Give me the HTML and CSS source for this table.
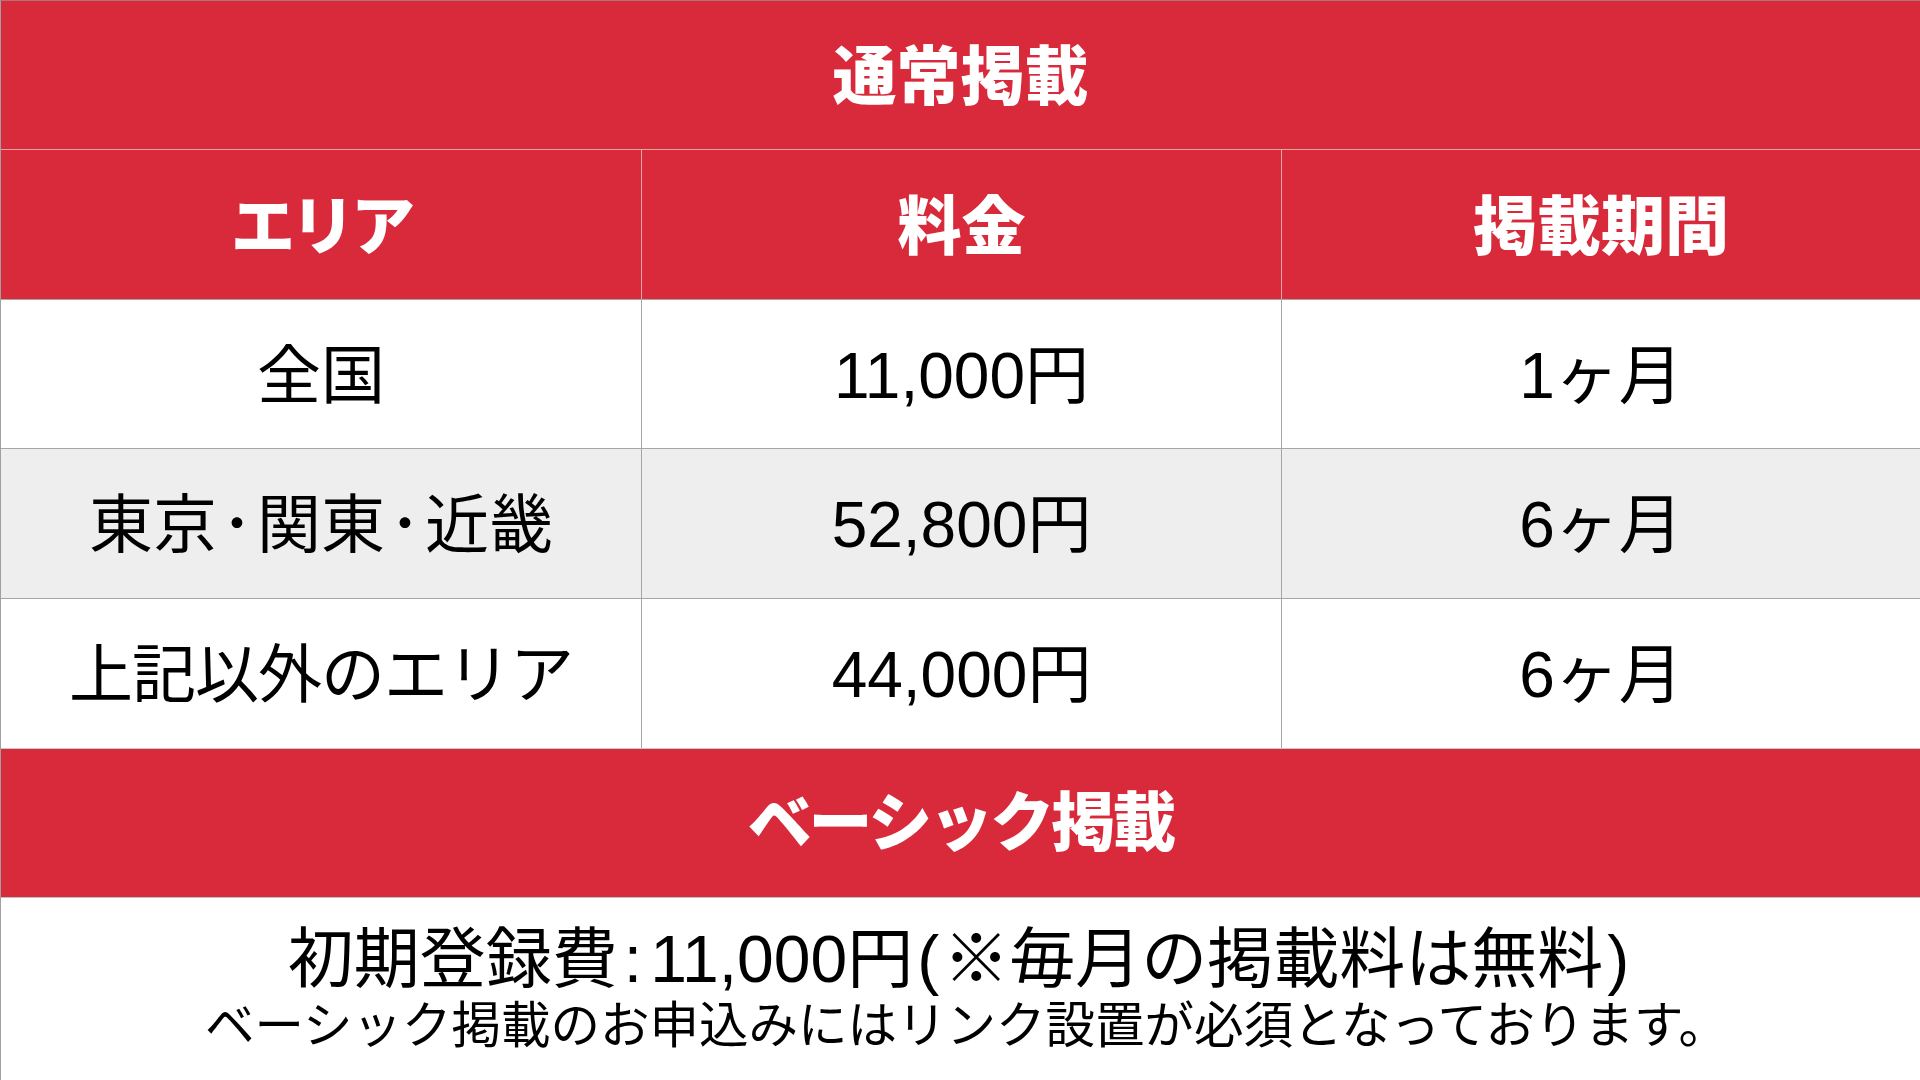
FILE: index.html
```html
<!DOCTYPE html>
<html lang="ja">
<head>
<meta charset="utf-8">
<title>通常掲載</title>
<link rel="stylesheet" href="styles.css">
</head>
<body>
<div class="sheet">
  <div class="band band-title">通常掲載</div>
  <div class="row row-head">
    <div class="cell cell-kana">エリア</div>
    <div class="cell">料金</div>
    <div class="cell">掲載期間</div>
  </div>
  <div class="row row-body">
    <div class="cell">全国</div>
    <div class="cell">11,000円</div>
    <div class="cell">1ヶ月</div>
  </div>
  <div class="row row-body row-alt">
    <div class="cell">東京<span class="dot">･</span>関東<span class="dot">･</span>近畿</div>
    <div class="cell">52,800円</div>
    <div class="cell">6ヶ月</div>
  </div>
  <div class="row row-body">
    <div class="cell cell-tight">上記以外のエリア</div>
    <div class="cell">44,000円</div>
    <div class="cell">6ヶ月</div>
  </div>
  <div class="band band-basic">ベーシック掲載</div>
  <div class="notes">
    <p class="note-main">初期登録費<span class="colon">:</span>11,000円<span class="paren">(</span>※毎月の掲載料は無料<span class="paren">)</span></p>
    <p class="note-sub">ベーシック掲載のお申込みにはリンク設置が必須となっております。</p>
  </div>
</div>
</body>
</html>
```

FILE: styles.css
```css
html, body {
  margin: 0;
  padding: 0;
  background: #ffffff;
}

body {
  width: 1920px;
  height: 1080px;
  overflow: hidden;
  font-family: "Liberation Sans", "Noto Sans CJK JP", sans-serif;
  color: #000000;
}

.sheet {
  width: 1920px;
  height: 1080px;
  display: flex;
  flex-direction: column;
  box-sizing: border-box;
  border-top: 1px solid #b0737a;
  border-left: 1px solid #a0a0a0;
}

.band {
  background: #d82a3b;
  color: #ffffff;
  font-family: "Noto Sans CJK JP", sans-serif;
  font-weight: 900;
  display: flex;
  align-items: center;
  justify-content: center;
  box-sizing: border-box;
}

.band-title {
  height: 148px;
  font-size: 64px;
  padding-bottom: 9px;
}

.band-basic {
  height: 149px;
  font-size: 64px;
  letter-spacing: -3px;
  border-top: 1px solid #c9c9c9;
  padding-bottom: 12px;
}

.row {
  display: grid;
  grid-template-columns: 640px 640px 1fr;
  box-sizing: border-box;
}

.cell {
  display: flex;
  align-items: center;
  justify-content: center;
  box-sizing: border-box;
}

.cell + .cell {
  border-left: 1px solid #a6a6a6;
}

.row-head {
  height: 150px;
  background: #d82a3b;
  color: #ffffff;
  font-family: "Noto Sans CJK JP", sans-serif;
  font-weight: 900;
  font-size: 64px;
  border-top: 1px solid #eba3aa;
}

.row-head .cell + .cell {
  border-left: 1px solid #eba3aa;
}

.row-head .cell {
  padding-bottom: 8px;
}

.row-head .cell-kana {
  letter-spacing: -4px;
}

.row-body {
  height: 149px;
  font-size: 64px;
  border-top: 1px solid #a6a6a6;
  background: #ffffff;
}

.row-body + .row-body {
  height: 150px;
}

.row-alt {
  background: #eeeeee;
}

.row-body .cell {
  padding-bottom: 9px;
}

.row-body .cell-tight {
  letter-spacing: -1px;
}

.dot {
  padding: 0 4px;
}

.notes {
  flex: 1;
  background: #ffffff;
  border-top: 1px solid #c0c0c0;
  box-sizing: border-box;
  padding-top: 26px;
  text-align: center;
}

.notes p {
  margin: 0;
}

.note-main {
  font-size: 66px;
  line-height: 70px;
}

.note-main .colon {
  padding: 0 8px 0 6px;
}

.note-main .paren {
  padding: 0 4px;
}

.note-sub {
  font-size: 49.5px;
  line-height: 64px;
  margin-top: 16px;
  padding-left: 12px;
}
```
